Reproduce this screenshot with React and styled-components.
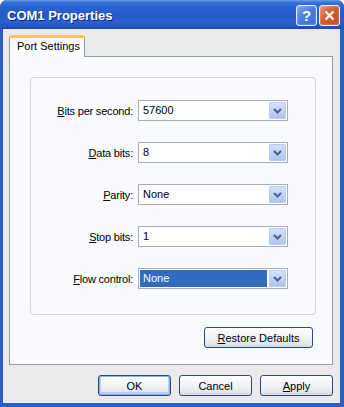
import React from 'react';
import styled, { createGlobalStyle } from 'styled-components';

const GlobalStyle = createGlobalStyle`
  html, body {
    margin: 0;
    padding: 0;
    background: #ffffff;
  }
  body {
    font-family: "Liberation Sans", Arial, sans-serif;
    font-size: 11px;
    color: #000;
  }
`;

const Window = styled.div`
  width: 344px;
  height: 407px;
  box-sizing: border-box;
  display: flex;
  flex-direction: column;
  background: #2a5ec8;
  border-radius: 7px 7px 0 0;
  overflow: hidden;
`;

const TitleBar = styled.div`
  height: 29px;
  flex: none;
  display: flex;
  align-items: center;
  gap: 2px;
  padding: 1px 4px 0 7px;
  box-sizing: border-box;
  background: linear-gradient(
    to bottom,
    #6f9be8 0%,
    #3a73db 8%,
    #2c63d0 20%,
    #2759c8 55%,
    #2a60cf 75%,
    #2456c2 90%,
    #1d48a8 100%
  );
`;

const Title = styled.div`
  flex: 1;
  color: #fff;
  font-weight: bold;
  font-size: 13px;
  text-shadow: 1px 1px 0 #0e2a78;
`;

const CaptionButton = styled.div`
  width: 21px;
  height: 21px;
  box-sizing: border-box;
  border: 1px solid #e8eefa;
  border-radius: 3px;
  display: flex;
  align-items: center;
  justify-content: center;
  color: #fff;
  font-weight: bold;
  font-size: 15px;
  background: ${(p) =>
    p.$close
      ? 'linear-gradient(135deg, #e9936e 0%, #d95b32 45%, #c94a22 100%)'
      : 'linear-gradient(135deg, #7ea6ee 0%, #4a7fe0 45%, #3a6cd2 100%)'};
  box-shadow: inset 0 0 2px rgba(255, 255, 255, 0.5);
`;

const Client = styled.div`
  flex: 1;
  margin: 0 4px 4px 3px;
  padding: 6px 7px 0 6px;
  background: #ebe9eb;
  display: flex;
  flex-direction: column;
`;

const TabStrip = styled.div`
  display: flex;
  position: relative;
  z-index: 1;
  margin-bottom: -1px;
`;

const Tab = styled.div`
  width: 76px;
  height: 22px;
  box-sizing: border-box;
  border: 1px solid #919b9c;
  border-bottom: none;
  border-top: 3px solid #ffc83c;
  border-radius: 3px 3px 0 0;
  background: #fbfbfd;
  padding: 2px 0 0 7px;
  white-space: nowrap;
`;

const Panel = styled.div`
  height: 309px;
  box-sizing: border-box;
  border: 1px solid #919b9c;
  background: #f9fafd;
  padding: 20px 17px 0 20px;
  display: flex;
  flex-direction: column;
`;

const Group = styled.div`
  width: 286px;
  height: 238px;
  box-sizing: border-box;
  border: 1px solid #d5d5d0;
  border-radius: 4px;
  padding-top: 22px;
  display: flex;
  flex-direction: column;
  gap: 21px;
`;

const Row = styled.div`
  display: flex;
  align-items: center;
  gap: 5px;
`;

const Label = styled.div`
  width: 102px;
  text-align: right;
  white-space: nowrap;
  letter-spacing: -0.2px;
`;

const Combo = styled.div`
  width: 150px;
  height: 21px;
  box-sizing: border-box;
  border: 1px solid #a5acb5;
  background: #fff;
  display: flex;
  align-items: center;
  padding: 1px;
  gap: 2px;
`;

const ComboText = styled.div`
  flex: 1;
  height: 17px;
  line-height: 17px;
  padding-left: 3px;
  background: ${(p) => (p.$selected ? '#316ac5' : 'transparent')};
  color: ${(p) => (p.$selected ? '#fff' : '#000')};
`;

const DropButton = styled.div`
  width: 17px;
  height: 17px;
  box-sizing: border-box;
  border: 1px solid #b9cbee;
  border-radius: 1px;
  background: linear-gradient(to bottom, #d2e0fb 0%, #bcd0f5 60%, #b0c6ef 100%);
  display: flex;
  align-items: center;
  justify-content: center;
`;

const PanelFooter = styled.div`
  display: flex;
  justify-content: flex-end;
  margin-top: 12px;
  padding-right: 2px;
`;

const Button = styled.div`
  width: ${(p) => p.$w || 73}px;
  height: 21px;
  box-sizing: border-box;
  border: 1px solid #2b4b7e;
  border-radius: 3px;
  background: linear-gradient(to bottom, #ffffff 0%, #f2f3f6 50%, #e2e5ec 85%, #cfd5e0 100%);
  display: flex;
  align-items: center;
  justify-content: center;
  box-shadow: ${(p) =>
    p.$default ? 'inset 0 0 0 1px #8db0ee, inset 0 -1px 0 2px #b6cdf4' : 'none'};
`;

const ButtonBar = styled.div`
  display: flex;
  justify-content: flex-end;
  gap: 8px;
  margin-top: 10px;
`;

const Chevron = () => (
  <svg width="9" height="6" viewBox="0 0 9 6">
    <path d="M1 1 L4.5 4.5 L8 1" fill="none" stroke="#4d6185" strokeWidth="2" />
  </svg>
);

const Mn = ({ children }) => <u>{children}</u>;

const rows = [
  { key: 'B', rest: 'its per second:', value: '57600' },
  { key: 'D', rest: 'ata bits:', value: '8' },
  { key: 'P', rest: 'arity:', value: 'None' },
  { key: 'S', rest: 'top bits:', value: '1' },
  { key: 'F', rest: 'low control:', value: 'None', selected: true },
];

export default function App() {
  return (
    <>
      <GlobalStyle />
      <Window>
        <TitleBar>
          <Title>COM1 Properties</Title>
          <CaptionButton>?</CaptionButton>
          <CaptionButton $close>
            <svg width="11" height="11" viewBox="0 0 11 11">
              <path d="M1.5 1.5 L9.5 9.5 M9.5 1.5 L1.5 9.5" stroke="#fff" strokeWidth="2.2" />
            </svg>
          </CaptionButton>
        </TitleBar>
        <Client>
          <TabStrip>
            <Tab>Port Settings</Tab>
          </TabStrip>
          <Panel>
            <Group>
              {rows.map((r) => (
                <Row key={r.key}>
                  <Label>
                    <Mn>{r.key}</Mn>
                    {r.rest}
                  </Label>
                  <Combo>
                    <ComboText $selected={r.selected}>{r.value}</ComboText>
                    <DropButton>
                      <Chevron />
                    </DropButton>
                  </Combo>
                </Row>
              ))}
            </Group>
            <PanelFooter>
              <Button $w={109}>
                <Mn>R</Mn>estore Defaults
              </Button>
            </PanelFooter>
          </Panel>
          <ButtonBar>
            <Button $default>OK</Button>
            <Button>Cancel</Button>
            <Button>
              <Mn>A</Mn>pply
            </Button>
          </ButtonBar>
        </Client>
      </Window>
    </>
  );
}
